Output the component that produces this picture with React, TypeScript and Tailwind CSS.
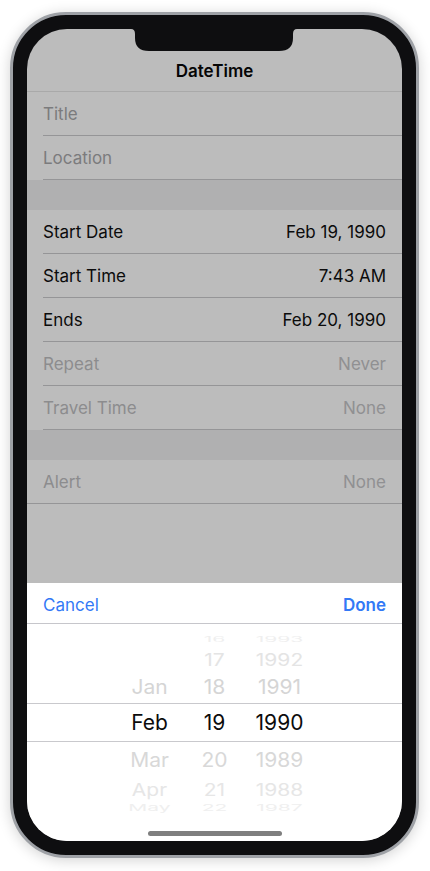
import React from "react";

const font = { fontFamily: "Inter, 'Noto Sans', 'Liberation Sans', sans-serif" };

function Row({
  label,
  value,
  labelCls = "text-[#0b0b0b]",
  valueCls = "text-[#0b0b0b]",
  full = false,
}: {
  label: string;
  value?: string;
  labelCls?: string;
  valueCls?: string;
  full?: boolean;
}) {
  if (full) {
    return (
      <div className="h-[44px] pl-[16px] pr-[16px] flex items-center justify-between border-b border-[#959597]">
        <span className={labelCls}>{label}</span>
        {value && <span className={valueCls}>{value}</span>}
      </div>
    );
  }
  return (
    <div className="h-[44px] pl-[16px]">
      <div className="h-full flex items-center justify-between pr-[16px] border-b border-[#959597]">
        <span className={labelCls}>{label}</span>
        {value && <span className={valueCls}>{value}</span>}
      </div>
    </div>
  );
}

function PickerRow({
  items,
  h,
  cls,
  scale,
  selected = false,
}: {
  items: [string, string, string];
  h: string;
  cls: string;
  scale: string;
  selected?: boolean;
}) {
  return (
    <div
      className={`${h} flex items-center justify-center ${
        selected ? "border-y border-[#c9c9cd]" : ""
      }`}
    >
      <div className={`flex items-center justify-center gap-[5px] ${scale} ${cls}`}>
        <span className="w-[70px] text-center">{items[0]}</span>
        <span className="w-[50px] text-center">{items[1]}</span>
        <span className="w-[70px] text-center">{items[2]}</span>
      </div>
    </div>
  );
}

export default function App() {
  return (
    <div className="w-full h-[871px] bg-white pt-[12px] pl-[10px]" style={font}>
      <div className="w-[409px] h-[846px] rounded-[56px] bg-[#0e0e10] border-[3px] border-[#9ea1a6] p-[14px] shadow-[0_2px_14px_rgba(0,0,0,0.18)]">
        <div className="relative w-[375px] h-[812px] rounded-[40px] overflow-hidden bg-[#bcbcbc] flex flex-col text-[17px] leading-[22px]">
          {/* nav */}
          <div className="h-[63px] shrink-0 border-b border-[#a9a9a9] flex justify-center pt-[31px]">
            <span className="font-semibold text-[#050505]">DateTime</span>
          </div>
          <Row label="Title" labelCls="text-[#7b7b7d]" />
          <Row label="Location" labelCls="text-[#7b7b7d]" />
          <div className="h-[30px] shrink-0 bg-[#b0b0b1]" />
          <Row label="Start Date" value="Feb 19, 1990" />
          <Row label="Start Time" value="7:43 AM" />
          <Row label="Ends" value="Feb 20, 1990" />
          <Row label="Repeat" value="Never" labelCls="text-[#8c8c8e]" valueCls="text-[#909092]" />
          <Row label="Travel Time" value="None" labelCls="text-[#8c8c8e]" valueCls="text-[#909092]" />
          <div className="h-[30px] shrink-0 bg-[#b0b0b1]" />
          <Row label="Alert" value="None" full labelCls="text-[#8c8c8e]" valueCls="text-[#909092]" />
          <div className="flex-1" />

          {/* picker sheet */}
          <div className="shrink-0 bg-white">
            <div className="h-[41px] flex items-center justify-between px-[16px] pt-[3px] border-b border-[#c6c6cb]">
              <span className="text-[#3379f6]">Cancel</span>
              <span className="text-[#3379f6] font-semibold">Done</span>
            </div>
            <div className="h-[217px] pt-[8px] text-[21px] leading-[26px]">
              <PickerRow items={["", "16", "1993"]} h="h-[16px]" cls="text-[#efefef]" scale="scale-y-[0.35]" />
              <PickerRow items={["", "17", "1992"]} h="h-[23px]" cls="text-[#e4e4e4]" scale="scale-y-[0.8]" />
              <PickerRow items={["Jan", "18", "1991"]} h="h-[32px]" cls="text-[#d5d5d5]" scale="scale-y-[0.95]" />
              <PickerRow items={["Feb", "19", "1990"]} h="h-[39px]" cls="text-[#0c0c0c]" scale="" selected />
              <PickerRow items={["Mar", "20", "1989"]} h="h-[36px]" cls="text-[#d8d8d8]" scale="scale-y-[0.95]" />
              <PickerRow items={["Apr", "21", "1988"]} h="h-[24px]" cls="text-[#e6e6e6]" scale="scale-y-[0.8]" />
              <PickerRow items={["May", "22", "1987"]} h="h-[12px]" cls="text-[#efefef]" scale="scale-y-[0.45]" />
            </div>
          </div>

          {/* notch */}
          <svg
            className="absolute top-0 left-[104px]"
            width="166"
            height="23"
            viewBox="0 0 166 23"
          >
            <path
              d="M0 0 H166 Q162 0 162 5 V9 Q162 22 148 22 H18 Q4 22 4 9 V5 Q4 0 0 0 Z"
              fill="#0e0e10"
            />
          </svg>
          {/* home indicator */}
          <div className="absolute bottom-[5px] left-1/2 -translate-x-1/2 w-[134px] h-[5px] rounded-full bg-[#7f7f7f]" />
        </div>
      </div>
    </div>
  );
}
